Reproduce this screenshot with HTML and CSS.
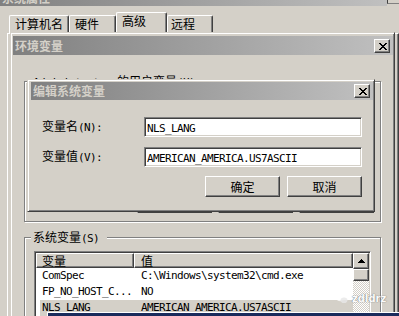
FILE: index.html
```html
<!DOCTYPE html>
<html>
<head>
<meta charset="utf-8">
<link rel="stylesheet" href="styles.css">
</head>
<body>
<div class="screen">
  <div class="sp-bar">
    <div class="sp-title"><span>系统属性</span></div>
    <div class="sp-corner"></div>
  </div>
  <div class="tabs">
    <div class="tab t1">计算机名</div>
    <div class="tab t2">硬件</div>
    <div class="tab sel">高级</div>
    <div class="tab t4">远程</div>
  </div>
  <div class="panel"></div>

  <div class="win env">
    <div class="titlebar env-title">
      <span class="ttext">环境变量</span>
      <div class="close"><svg width="8" height="7" viewBox="0 0 8 7" shape-rendering="crispEdges"><path d="M0 0h2v1H0zM6 0h2v1H6zM1 1h2v1H1zM5 1h2v1H5zM2 2h4v1H2zM3 3h2v1H3zM2 4h4v1H2zM1 5h2v1H1zM5 5h2v1H5zM0 6h2v1H0zM6 6h2v1H6z" fill="#000"/></svg></div>
    </div>
    <div class="group user">
      <div class="legend"><span class="m">Administrator </span>的用户变量<span class="m">(U)</span></div>
      <div class="ubtns">
        <div class="btn"></div>
        <div class="btn"></div>
        <div class="btn"></div>
      </div>
    </div>
    <div class="group sys">
      <div class="legend sys-legend">系统变量<span class="m">(S)</span></div>
      <div class="list">
        <div class="lv">
          <div class="lvh">
            <div class="hc hc1">变量</div>
            <div class="hc hc2">值</div>
          </div>
          <div class="row"><span class="c1 m">ComSpec</span><span class="c2 m">C:\Windows\system32\cmd.exe</span></div>
          <div class="row"><span class="c1 m">FP_NO_HOST_C...</span><span class="c2 m">NO</span></div>
          <div class="row selrow"><span class="c1 m">NLS_LANG</span><span class="c2 m">AMERICAN_AMERICA.US7ASCII</span></div>
        </div>
        <div class="sb">
          <div class="sbtn"><svg width="7" height="4" viewBox="0 0 7 4" shape-rendering="crispEdges"><path d="M3 0h1v1H3zM2 1h3v1H2zM1 2h5v1H1zM0 3h7v1H0z" fill="#000"/></svg></div>
          <div class="thumb"></div>
          <div class="track"></div>
        </div>
      </div>
    </div>
  </div>

  <div class="win edit">
    <div class="titlebar edit-title">
      <span class="ttext">编辑系统变量</span>
      <div class="close"><svg width="8" height="7" viewBox="0 0 8 7" shape-rendering="crispEdges"><path d="M0 0h2v1H0zM6 0h2v1H6zM1 1h2v1H1zM5 1h2v1H5zM2 2h4v1H2zM3 3h2v1H3zM2 4h4v1H2zM1 5h2v1H1zM5 5h2v1H5zM0 6h2v1H0zM6 6h2v1H6z" fill="#000"/></svg></div>
    </div>
    <div class="ebody">
      <div class="frow">
        <div class="flabel">变量名<span class="m">(N):</span></div>
        <div class="field"><span class="m">NLS_LANG</span></div>
      </div>
      <div class="frow r2">
        <div class="flabel">变量值<span class="m">(V):</span></div>
        <div class="field"><span class="m">AMERICAN_AMERICA.US7ASCII</span></div>
      </div>
      <div class="ebtns">
        <div class="btn">确定</div>
        <div class="btn">取消</div>
      </div>
    </div>
  </div>

  <div class="navy"></div>
  <div class="wm">
    <svg width="12" height="10" viewBox="0 0 12 10"><ellipse cx="4.5" cy="4" rx="4" ry="3.3" fill="#fff" opacity=".85"/><ellipse cx="8" cy="6.2" rx="3.4" ry="2.8" fill="#e8e8e8" opacity=".9"/></svg>
    <span>zdldrz</span>
  </div>
</div>
</body>
</html>
```
FILE: styles.css
```css
* { box-sizing: border-box; }
html, body { margin: 0; padding: 0; }
body {
  width: 399px; height: 316px; overflow: hidden;
  background: #d4d0c8;
  font-family: "Noto Sans CJK SC", sans-serif;
  font-size: 12px; line-height: 12px; color: #000;
}
.screen { position: relative; width: 399px; height: 316px; overflow: hidden; }
.m { font-family: "DejaVu Sans Mono", monospace; font-size: 11px; letter-spacing: -0.62px; }

/* system properties window top */
.sp-bar { display: flex; height: 6px; }
.sp-title {
  width: 387px; height: 6px; overflow: hidden;
  background: linear-gradient(90deg, #808080, #c0c0c0);
  color: #d4d0c8; font-weight: 700; padding-left: 2px;
}
.sp-title span { display: block; margin-top: -8px; }
.sp-corner { flex: 1; height: 4px; border-left: 1px solid #404040; border-bottom: 1px solid #808080; }

/* tabs */
.tabs { display: flex; align-items: flex-end; height: 27px; padding-left: 9px; }
.tab {
  height: 18px; padding: 2px 0 0 5px;
  border-top: 1px solid #fff; border-left: 1px solid #fff; border-right: 1px solid #404040;
  box-shadow: inset -1px 0 #808080;
  border-radius: 2px 2px 0 0;
  white-space: nowrap;
}
.t1 { width: 60px; }
.t2 { width: 47px; }
.sel { width: 51px; height: 21px; }
.t4 { width: 46px; padding-left: 3px; }

.panel {
  margin-left: 7px; width: 392px; height: 283px;
  border-top: 1px solid #fff; border-left: 1px solid #fff; border-right: 1px solid #404040;
  box-shadow: inset -1px 0 #808080;
}

/* windows */
.win {
  position: absolute; background: #d4d0c8;
  border: 1px solid; border-color: #d4d0c8 #404040 #404040 #d4d0c8;
  box-shadow: inset 1px 1px #fff, inset -1px -1px #808080;
}
.titlebar {
  display: flex; align-items: center; justify-content: space-between;
  background: linear-gradient(90deg, #808080, #c0c0c0);
  color: #d4d0c8; font-weight: 700; padding-left: 2px;
}
.ttext { line-height: 12px; }
.close {
  width: 16px; height: 14px; margin-right: 3px;
  background: #d4d0c8;
  border: 1px solid; border-color: #fff #404040 #404040 #fff;
  box-shadow: inset -1px -1px #808080;
  display: flex; align-items: center; justify-content: center;
  padding: 1px 0 0 1px;
}
.close svg { display: block; }

.env { left: 10px; top: 32px; width: 385px; height: 300px; padding: 3px 1px 0 2px; }
.env-title { height: 19px; }

.group { border: 1px solid #808080; box-shadow: inset 1px 1px #fff, 1px 1px #fff; }
.legend {
  display: block; width: max-content; height: 12px;
  margin: -7px 0 0 6px; padding: 0 2px;
  background: #d4d0c8; white-space: nowrap;
}
.sys-legend { padding-right: 8px; }
.user { margin: 26px 0 0 11px; width: 357px; height: 141px; display: flex; flex-direction: column; }
.ubtns { margin: auto 6px 8px 0; display: flex; justify-content: flex-end; gap: 6px; }
.btn {
  width: 75px; height: 23px;
  display: flex; align-items: center; justify-content: center;
  background: #d4d0c8;
  border: 1px solid; border-color: #fff #404040 #404040 #fff;
  box-shadow: inset -1px -1px #808080;
  white-space: nowrap;
}
.sys { margin: 15px 0 0 11px; width: 357px; height: 100px; }

.list {
  margin: 8px 0 0 9px; width: 337px; height: 90px;
  background: #fff;
  border: 1px solid; border-color: #808080 #fff #fff #808080;
  box-shadow: inset 1px 1px #404040, inset -1px -1px #d4d0c8;
  padding: 1px; display: flex;
}
.lv { flex: 1; }
.lvh { display: flex; height: 15px; }
.hc {
  background: #d4d0c8;
  border: 1px solid; border-color: #fff #404040 #404040 #fff;
  box-shadow: inset -1px -1px #808080;
  padding-left: 5px; line-height: 13px;
}
.hc1 { width: 98px; }
.hc2 { flex: 1; padding-left: 6px; }
.row { display: flex; height: 16px; line-height: 16px; white-space: nowrap; }
.c1 { width: 98px; padding-left: 6px; }
.c2 { padding-left: 7px; }
.selrow { background: linear-gradient(90deg, #fff 4px, #d4d0c8 4px); }

.sb { width: 16px; display: flex; flex-direction: column; }
.sbtn, .thumb {
  background: #d4d0c8;
  border: 1px solid; border-color: #fff #404040 #404040 #fff;
  box-shadow: inset -1px -1px #808080;
}
.sbtn { height: 16px; display: flex; align-items: center; justify-content: center; }
.sbtn svg { display: block; }
.thumb { height: 12px; }
.track { flex: 1; background: repeating-conic-gradient(#fff 0 25%, #d4d0c8 0 50%) 0 0 / 2px 2px; }

/* edit dialog */
.edit { left: 27px; top: 79px; width: 348px; height: 133px; padding: 2px 1px 0 3px; }
.edit-title { height: 18px; }
.ebody { padding: 17px 11px 0 11px; }
.frow { display: flex; align-items: center; height: 20px; }
.r2 { margin-top: 10px; }
.flabel { width: 102px; white-space: nowrap; }
.field {
  flex: 1; height: 20px; background: #fff;
  border: 1px solid; border-color: #808080 #fff #fff #808080;
  box-shadow: inset 1px 1px #404040, inset -1px -1px #d4d0c8;
  padding-left: 2px; line-height: 18px; white-space: nowrap;
}
.ebtns { margin-top: 9px; display: flex; justify-content: flex-end; gap: 7px; }
.ebtns .btn { height: 21px; }

.navy {
  position: absolute; left: 47px; top: 312px; width: 352px; height: 4px;
  border-top: 1px solid #fff; border-left: 1px solid #fff;
  background: #1a2b5c;
}
.wm {
  position: absolute; left: 336px; top: 293px;
  display: flex; align-items: center; gap: 4px;
  color: #fff; font-family: "DejaVu Sans", sans-serif; font-weight: 700; font-size: 10px; line-height: 12px;
  text-shadow: 0 0 1px #777, 0 0 1px #777;
  opacity: .9;
}
.wm svg { display: block; }
```
